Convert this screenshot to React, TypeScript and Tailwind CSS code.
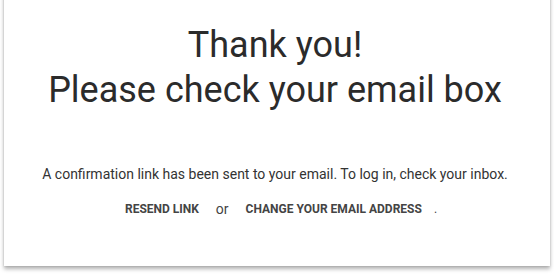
export default function App() {
  return (
    <div className="w-[554px] h-[275px] bg-white overflow-hidden">
      <div className="mx-[4px] mt-[-10px] h-[276px] bg-white shadow-[0_3px_4px_rgba(0,0,0,0.3),0_0_2px_rgba(0,0,0,0.15)] flex flex-col items-center font-['Roboto',sans-serif] text-[#333]">
        <h1 className="mt-[33px] mr-[4px] text-[36px] leading-[45px] font-normal text-center text-[#2b2b2b]">
          Thank you!
          <br />
          Please check your email box
        </h1>
        <p className="mt-[51px] mr-[4px] text-[14px] leading-[20px] text-[#333]">
          A confirmation link has been sent to your email. To log in, check your inbox.
        </p>
        <div className="mt-[17px] ml-[8px] flex items-center text-[12px] leading-[16px] text-[#444]">
          <span className="font-bold uppercase">Resend link</span>
          <span className="ml-[17px] text-[14px] font-normal">or</span>
          <span className="ml-[17px] font-bold uppercase">Change your email address</span>
          <span className="ml-[12px]">.</span>
        </div>
      </div>
    </div>
  );
}
